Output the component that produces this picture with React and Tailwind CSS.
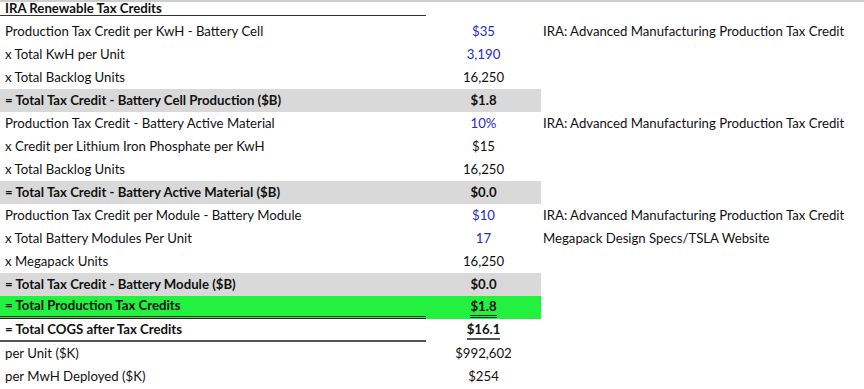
const rows = [
  { label: "Production Tax Credit per KwH - Battery Cell", value: "$35", blue: true, note: "IRA: Advanced Manufacturing Production Tax Credit" },
  { label: "x Total KwH per Unit", value: "3,190", blue: true },
  { label: "x Total Backlog Units", value: "16,250" },
  { label: "= Total Tax Credit - Battery Cell Production ($B)", value: "$1.8", kind: "total" },
  { label: "Production Tax Credit - Battery Active Material", value: "10%", blue: true, note: "IRA: Advanced Manufacturing Production Tax Credit" },
  { label: "x Credit per Lithium Iron Phosphate per KwH", value: "$15" },
  { label: "x Total Backlog Units", value: "16,250" },
  { label: "= Total Tax Credit - Battery Active Material ($B)", value: "$0.0", kind: "total" },
  { label: "Production Tax Credit per Module - Battery Module", value: "$10", blue: true, note: "IRA: Advanced Manufacturing Production Tax Credit" },
  { label: "x Total Battery Modules Per Unit", value: "17", blue: true, note: "Megapack Design Specs/TSLA Website" },
  { label: "x Megapack Units", value: "16,250" },
  { label: "= Total Tax Credit - Battery Module ($B)", value: "$0.0", kind: "total" },
  { label: "= Total Production Tax Credits", value: "$1.8", kind: "grand" },
  { label: "= Total COGS after Tax Credits", value: "$16.1", kind: "cogs" },
  { label: "per Unit ($K)", value: "$992,602" },
  { label: "per MwH Deployed ($K)", value: "$254" },
];

function Row({ row }) {
  const bold = row.kind === "total" || row.kind === "grand" || row.kind === "cogs";
  const bg =
    row.kind === "total" ? "bg-[#d9d9d9]" : row.kind === "grand" ? "bg-[#22f23f]" : "";
  const line =
    row.kind === "grand"
      ? "border-b-[3px] border-double border-[#222]"
      : row.kind === "cogs"
      ? "border-b-2 border-[#555]"
      : "";

  return (
    <div className="flex h-[23px]">
      <div className={`flex w-[541px] ${bg}`}>
        <div className={`flex h-full w-[426px] items-center pl-[5px] ${line} ${bold ? "font-bold" : ""}`}>
          {row.label}
        </div>
        <div className="flex h-full w-[115px] items-center justify-center">
          <span
            className={`leading-[17px] ${line} ${bold ? "font-bold" : ""} ${
              row.blue ? "text-[#2727cf]" : ""
            }`}
          >
            {row.value}
          </span>
        </div>
      </div>
      <div className="flex items-center pl-[2px]">{row.note}</div>
    </div>
  );
}

export default function App() {
  return (
    <div className="h-[389px] w-[864px] overflow-hidden border-t-2 border-[#cdcdcd] bg-white font-['Lato',sans-serif] text-[13.2px] text-[#111]">
      <div className="h-[18px]">
        <div className="flex h-[14px] w-[426px] items-center border-b border-[#333] pl-[5px] font-bold">
          IRA Renewable Tax Credits
        </div>
      </div>
      {rows.map((row, i) => (
        <Row key={i} row={row} />
      ))}
    </div>
  );
}
